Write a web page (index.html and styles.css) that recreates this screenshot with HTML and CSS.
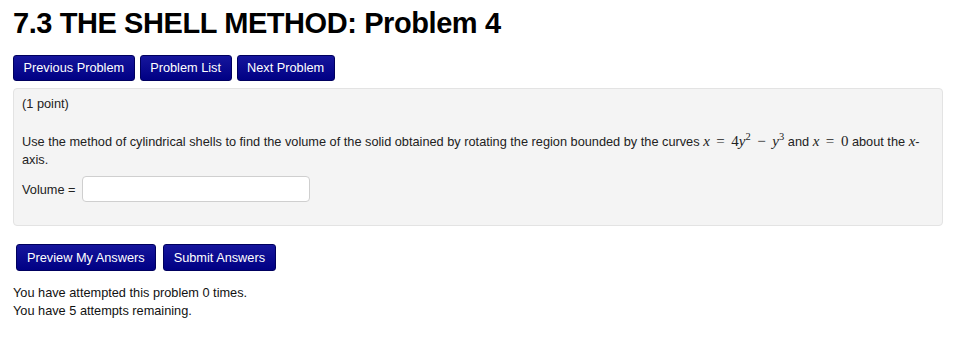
FILE: index.html
```html
<!DOCTYPE html>
<html>
<head>
<meta charset="utf-8">
<link rel="stylesheet" href="styles.css">
</head>
<body>
<h1 class="title">7.3 THE SHELL METHOD: Problem 4</h1>
<div class="nav">
  <a class="btn">Previous Problem</a>
  <a class="btn">Problem List</a>
  <a class="btn">Next Problem</a>
</div>
<div class="well">
  <p class="point">(1 point)</p>
  <p class="question"><span>Use the method of cylindrical shells to find the volume of the solid obtained by rotating the region bounded by the curves</span> <span class="math"><span class="m">x</span> <span class="mo">=</span> <span class="mn">4</span><span class="m">y</span><sup class="sup">2</sup> <span class="mo">−</span> <span class="m">y</span><sup class="sup">3</sup></span> <span>and</span> <span class="math"><span class="m">x</span> <span class="mo">=</span> <span class="mn">0</span></span> <span>about the</span> <span class="m">x</span><span>-</span><wbr><span>axis.</span></p>
  <div class="answer">
    <label class="lbl">Volume =</label>
    <input class="field" type="text">
  </div>
</div>
<div class="actions">
  <a class="btn btn-lg">Preview My Answers</a>
  <a class="btn btn-lg">Submit Answers</a>
</div>
<div class="status">
  <div>You have attempted this problem 0 times.</div>
  <div>You have 5 attempts remaining.</div>
</div>
</body>
</html>
```
FILE: styles.css
```css
html, body {
  margin: 0;
  padding: 0;
  background: #fff;
}
body {
  padding: 0 13px;
  font-family: "Liberation Sans", Arial, Helvetica, sans-serif;
  font-size: 12.75px;
  color: #222;
}
.title {
  margin: 0;
  padding-top: 5px;
  font-size: 29px;
  line-height: 36px;
  font-weight: bold;
  color: #000;
  letter-spacing: -0.42px;
}
.nav {
  display: flex;
  gap: 5px;
  margin-top: 14px;
}
.btn {
  display: inline-block;
  box-sizing: border-box;
  height: 26px;
  line-height: 24px;
  padding: 0 9.5px;
  border: 1px solid #00005e;
  border-radius: 3px;
  background: linear-gradient(#16169c, #000084);
  color: #fff;
  font-size: 12.75px;
  white-space: nowrap;
}
.well {
  margin-top: 7px;
  box-sizing: border-box;
  width: 930px;
  height: 138px;
  background: #f4f4f4;
  border: 1px solid #e3e3e3;
  border-radius: 4px;
  padding: 8px 8px;
}
.point {
  margin: 0;
  line-height: 14px;
}
.question {
  margin: 22px 0 0;
  line-height: 18px;
}
.math {
  white-space: nowrap;
}
.m {
  font-family: "Liberation Serif", "Times New Roman", serif;
  font-style: italic;
  font-size: 15px;
  line-height: 1;
}
.mn, .mo {
  font-family: "Liberation Serif", "Times New Roman", serif;
  font-size: 15px;
  line-height: 1;
}
.mo {
  margin: 0 3px;
}
.sup {
  font-family: "Liberation Serif", "Times New Roman", serif;
  font-size: 10.5px;
  line-height: 0;
  vertical-align: 6px;
}
.answer {
  margin-top: 7px;
  display: flex;
  align-items: center;
  gap: 6px;
}
.field {
  box-sizing: border-box;
  width: 228px;
  height: 26px;
  margin: 0;
  border: 1px solid #cfcfcf;
  border-radius: 4px;
  background: #fff;
}
.actions {
  display: flex;
  gap: 7px;
  margin: 18px 0 0 3px;
}
.btn-lg {
  height: 27px;
  line-height: 25px;
  padding: 0 10px;
}
.status {
  margin-top: 13px;
  line-height: 18px;
  color: #111;
}
```
